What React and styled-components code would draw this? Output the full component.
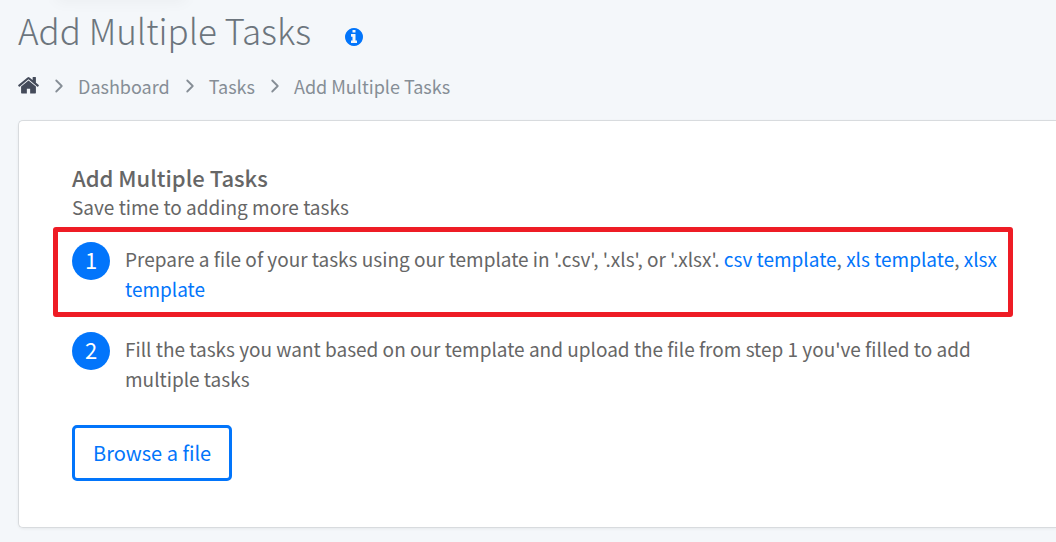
import React, { useRef } from 'react';
import styled, { createGlobalStyle } from 'styled-components';
import { ChevronRight } from 'lucide-react';

const GlobalStyle = createGlobalStyle`
    * {
        box-sizing: border-box;
    }
    body {
        margin: 0;
        background-color: #F4F7FA;
        color: #666666;
        font-family: "Noto Sans CJK SC", "Open Sans", sans-serif;
        font-size: 19px;
        line-height: 30px;
    }
`;

const Page = styled.div`
    position: relative;
    min-height: 100vh;
    padding: 5px 0 14px 18px;
    overflow: hidden;
    /* soft shadow under the bar above the page */
    &::before {
        content: "";
        position: absolute;
        top: -10px;
        left: 56px;
        width: 130px;
        height: 10px;
        box-shadow: 0 0 16px rgba(0, 0, 0, 0.06);
    }
`;

const PageHeader = styled.header`
    display: flex;
    align-items: center;
    gap: 34px;
`;

const Title = styled.h1`
    margin: 0;
    font-size: 35px;
    font-weight: 200;
    line-height: 50px;
    color: #6C757D;
`;

const InfoButton = styled.button`
    display: flex;
    margin-top: 14px;
    padding: 0;
    border: none;
    background: none;
    color: #0275FB;
    cursor: pointer;
`;

const Breadcrumb = styled.ol`
    display: flex;
    align-items: center;
    gap: 9px;
    margin: 16px 0 19px;
    padding: 0;
    list-style: none;
    font-size: 18px;
    color: #868E96;
`;

const Crumb = styled.li`
    display: flex;
    align-items: center;
    gap: 8px;
`;

const CrumbLink = styled.a`
    display: flex;
    color: ${props => props.$home ? '#444B5A' : 'inherit'};
    text-decoration: none;
    &:hover {
        color: #0275FB;
    }
`;

const Card = styled.main`
    padding: 41px 43px 46px 34px;
    border: 1px solid #D8DBDE;
    border-right: none;
    border-radius: 5px 0 0 5px;
    background-color: white;
    box-shadow: 0 1px 3px rgba(0, 0, 0, 0.06);
`;

const CardHeader = styled.div`
    padding-left: 19px;
`;

const CardTitle = styled.h2`
    margin: 0;
    font-size: 22px;
    font-weight: 500;
    line-height: 30px;
`;

const Subtitle = styled.p`
    margin: 0;
`;

const Steps = styled.ol`
    margin: 5px 0 0;
    padding: 0;
    list-style: none;
`;

const Step = styled.li`
    display: flex;
    gap: 15px;
    padding: 10px 8px 8px 14px;
    border: 5px solid ${props => props.$highlighted ? '#EE1C25' : 'transparent'};
    border-radius: 3px;
`;

const StepNumber = styled.span`
    flex: none;
    width: 38px;
    height: 38px;
    border-radius: 50%;
    background-color: #0275FB;
    color: white;
    font-size: 22px;
    line-height: 35px;
    text-align: center;
`;

const StepText = styled.p`
    flex: 1;
    margin: 0;
    padding-top: 2px;
`;

const TemplateLink = styled.a`
    color: #0275FB;
    text-decoration: none;
    &:hover {
        text-decoration: underline;
    }
`;

const BrowseButton = styled.button`
    margin: 18px 0 0 19px;
    padding: 10px 18px;
    border: 3px solid #0275FB;
    border-radius: 5px;
    background-color: white;
    color: #0275FB;
    font-family: inherit;
    font-size: 20px;
    line-height: 30px;
    &:hover {
        cursor: pointer;
        background-color: #F4F7FA;
    }
`;

const InfoIcon = () => (
    <svg width='18' height='18' viewBox='0 128 1536 1536' fill='currentColor' aria-hidden='true'>
        <path d='M1024 1376v-160q0-14-9-23t-23-9h-96v-512q0-14-9-23t-23-9h-320q-14 0-23 9t-9 23v160q0 14 9 23t23 9h96v320h-96q-14 0-23 9t-9 23v160q0 14 9 23t23 9h448q14 0 23-9t9-23zm-128-896v-160q0-14-9-23t-23-9h-192q-14 0-23 9t-9 23v160q0 14 9 23t23 9h192q14 0 23-9t9-23zm640 416q0 209-103 385.5t-279.5 279.5-385.5 103-385.5-103-279.5-279.5-103-385.5 103-385.5 279.5-279.5 385.5-103 385.5 103 279.5 279.5 103 385.5z' />
    </svg>
);

const HomeIcon = () => (
    <svg width='21' height='20' viewBox='80 170 1632 1554' fill='currentColor' aria-hidden='true'>
        <path d='M1472 992v480q0 26-19 45t-45 19h-384v-384h-256v384h-384q-26 0-45-19t-19-45v-480q0-1 .5-3t.5-3l575-474 575 474q1 2 1 6zm223-69l-62 74q-8 9-21 11h-3q-13 0-21-7l-692-577-692 577q-12 8-24 7-13-2-21-11l-62-74q-8-10-7-23.5t11-21.5l719-599q32-26 76-26t76 26l244 204v-195q0-14 9-23t23-9h192q14 0 23 9t9 23v408l219 182q10 8 11 21.5t-7 23.5z' />
    </svg>
);

const Separator = () => <ChevronRight size={22} strokeWidth={2} aria-hidden='true' />;

const App = () => {
    const fileInput = useRef(null);

    return (
        <Page>
            <GlobalStyle />
            <PageHeader>
                <Title>Add Multiple Tasks</Title>
                <InfoButton type='button' aria-label='Information'>
                    <InfoIcon />
                </InfoButton>
            </PageHeader>

            <nav aria-label='Breadcrumb'>
                <Breadcrumb>
                    <Crumb>
                        <CrumbLink href='#home' aria-label='Home' $home>
                            <HomeIcon />
                        </CrumbLink>
                    </Crumb>
                    <Crumb>
                        <Separator />
                        <CrumbLink href='#dashboard'>Dashboard</CrumbLink>
                    </Crumb>
                    <Crumb>
                        <Separator />
                        <CrumbLink href='#tasks'>Tasks</CrumbLink>
                    </Crumb>
                    <Crumb aria-current='page'>
                        <Separator />
                        Add Multiple Tasks
                    </Crumb>
                </Breadcrumb>
            </nav>

            <Card>
                <CardHeader>
                    <CardTitle>Add Multiple Tasks</CardTitle>
                    <Subtitle>Save time to adding more tasks</Subtitle>
                </CardHeader>

                <Steps>
                    <Step $highlighted>
                        <StepNumber>1</StepNumber>
                        <StepText>
                            Prepare a file of your tasks using our template in '.csv', '.xls', or '.xlsx'.{' '}
                            <TemplateLink href='#csv'>csv template</TemplateLink>,{' '}
                            <TemplateLink href='#xls'>xls template</TemplateLink>,{' '}
                            <TemplateLink href='#xlsx'>xlsx template</TemplateLink>
                        </StepText>
                    </Step>
                    <Step>
                        <StepNumber>2</StepNumber>
                        <StepText>
                            Fill the tasks you want based on our template and upload the file from step 1 you've filled to add multiple tasks
                        </StepText>
                    </Step>
                </Steps>

                <BrowseButton type='button' onClick={() => fileInput.current.click()}>
                    Browse a file
                </BrowseButton>
                <input ref={fileInput} type='file' accept='.csv,.xls,.xlsx' aria-label='Task file' hidden />
            </Card>
        </Page>
    )
}

export default App;
